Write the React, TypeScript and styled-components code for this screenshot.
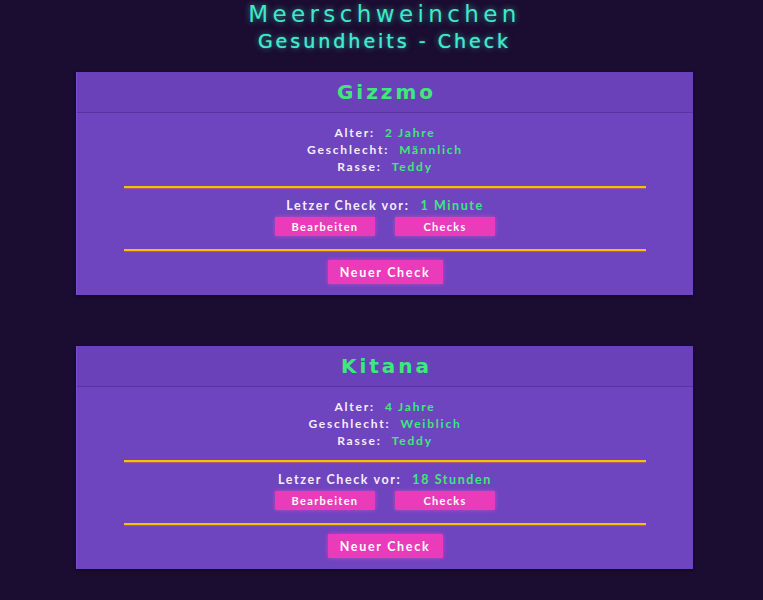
import React from "react";
import styled, { createGlobalStyle } from "styled-components";

const Global = createGlobalStyle`
  html, body { margin: 0; padding: 0; background: #1b0c31; }
  body { font-family: Lato, "Open Sans", sans-serif; color: #fff; }
`;

const Page = styled.div`
  display: flex;
  flex-direction: column;
  align-items: center;
  padding: 2px 0 30px 6px;
`;

const Title = styled.h1`
  margin: 0;
  font-family: "DejaVu Sans", "Open Sans", sans-serif;
  font-weight: 400;
  font-size: 23px;
  letter-spacing: 4.4px;
  line-height: 24px;
  color: #3fe9c9;
  text-shadow: 0 0 6px rgba(63, 233, 201, 0.6);
`;

const Subtitle = styled.h2`
  margin: 0;
  font-family: "DejaVu Sans", "Open Sans", sans-serif;
  font-weight: 400;
  font-size: 19px;
  letter-spacing: 3px;
  line-height: 30px;
  color: #3fe9c9;
  text-shadow: 0 0 1px #3fe9c9, 0 0 6px rgba(63, 233, 201, 0.6);
`;

const Cards = styled.div`
  margin-top: 16px;
  display: flex;
  flex-direction: column;
  gap: 51px;
`;

const Card = styled.section`
  width: 617px;
  background: #6f44bf;
  border-left: 1px solid #7a50cc;
  box-shadow: 0 1px 3px rgba(0, 0, 0, 0.4);
  box-sizing: border-box;
`;

const CardHeader = styled.header`
  height: 41px;
  display: flex;
  align-items: center;
  justify-content: center;
  background: #6b41b9;
  border-bottom: 1px solid #5a33a3;
  box-sizing: border-box;
`;

const Name = styled.h3`
  margin: 0 0 0 3px;
  font-family: "DejaVu Sans", "Open Sans", sans-serif;
  font-weight: 700;
  font-size: 20px;
  letter-spacing: 3px;
  color: #3ee87c;
`;

const Body = styled.div`
  padding: 11px 47px 11px;
  display: flex;
  flex-direction: column;
  align-items: stretch;
`;

const Info = styled.div`
  display: flex;
  flex-direction: column;
  align-items: center;
`;

const Row = styled.div`
  display: flex;
  gap: 10px;
  font-size: 12px;
  font-weight: 700;
  letter-spacing: 1.8px;
  line-height: 17px;
`;

const Label = styled.span`
  color: #f4eefc;
`;

const Value = styled.span`
  color: #3ee87c;
`;

const Divider = styled.hr<{ $gap?: number }>`
  margin: ${(p) => p.$gap ?? 11}px 0 0;
  border: 0;
  height: 2px;
  background: #f4c20d;
  box-shadow: 0 1px 1px rgba(255, 140, 0, 0.4);
`;

const CheckBlock = styled.div`
  padding-top: 9px;
  display: flex;
  flex-direction: column;
  align-items: center;
  gap: 3px;
`;

const CheckRow = styled(Row)`
  font-size: 12.5px;
  letter-spacing: 1.6px;
  gap: 11px;
`;

const ButtonRow = styled.div`
  display: flex;
  gap: 20px;
`;

const Button = styled.button<{ $big?: boolean }>`
  border: 0;
  border-radius: 1px;
  background: #e93bba;
  color: #fff;
  font-family: Lato, sans-serif;
  font-weight: 700;
  font-size: ${(p) => (p.$big ? "12.5px" : "11px")};
  letter-spacing: ${(p) => (p.$big ? "1.7px" : "1.3px")};
  width: ${(p) => (p.$big ? "115px" : "100px")};
  height: ${(p) => (p.$big ? "24px" : "19px")};
  padding: 0;
  box-shadow: 0 0 4px rgba(240, 70, 200, 0.7);
  cursor: pointer;
`;

const Footer = styled.div`
  padding-top: 9px;
  display: flex;
  justify-content: center;
`;

type Pig = { name: string; age: string; sex: string; breed: string; last: string };

const pigs: Pig[] = [
  { name: "Gizzmo", age: "2 Jahre", sex: "Männlich", breed: "Teddy", last: "1 Minute" },
  { name: "Kitana", age: "4 Jahre", sex: "Weiblich", breed: "Teddy", last: "18 Stunden" },
];

function PigCard({ pig }: { pig: Pig }) {
  return (
    <Card>
      <CardHeader>
        <Name>{pig.name}</Name>
      </CardHeader>
      <Body>
        <Info>
          <Row><Label>Alter:</Label><Value>{pig.age}</Value></Row>
          <Row><Label>Geschlecht:</Label><Value>{pig.sex}</Value></Row>
          <Row><Label>Rasse:</Label><Value>{pig.breed}</Value></Row>
        </Info>
        <Divider />
        <CheckBlock>
          <CheckRow><Label>Letzer Check vor:</Label><Value>{pig.last}</Value></CheckRow>
          <ButtonRow>
            <Button>Bearbeiten</Button>
            <Button>Checks</Button>
          </ButtonRow>
        </CheckBlock>
        <Divider $gap={13} />
        <Footer>
          <Button $big>Neuer Check</Button>
        </Footer>
      </Body>
    </Card>
  );
}

export default function App() {
  return (
    <>
      <Global />
      <Page>
        <Title>Meerschweinchen</Title>
        <Subtitle>Gesundheits - Check</Subtitle>
        <Cards>
          {pigs.map((p) => (
            <PigCard key={p.name} pig={p} />
          ))}
        </Cards>
      </Page>
    </>
  );
}
